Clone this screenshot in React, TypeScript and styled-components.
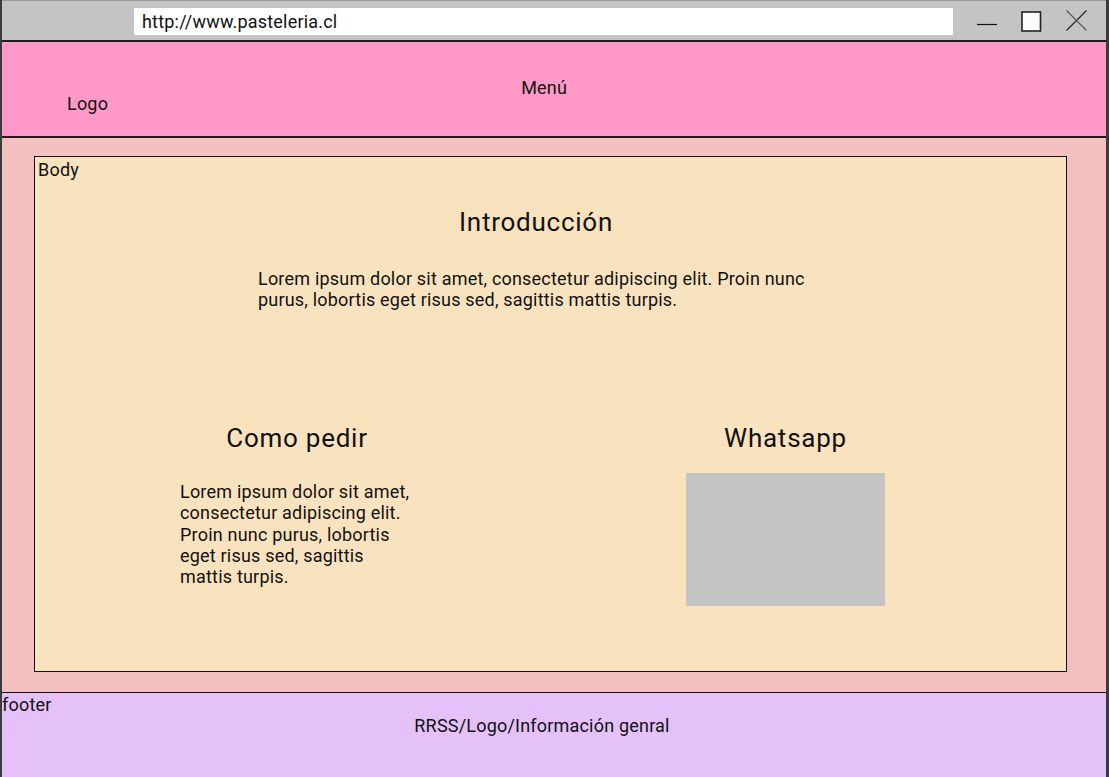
import React from "react";
import styled, { createGlobalStyle } from "styled-components";

const Global = createGlobalStyle`
  html, body { margin: 0; padding: 0; }
  body {
    font-family: Roboto, "Liberation Sans", sans-serif;
    color: #111;
    background: #3b3b3b;
    letter-spacing: 0.2px;
  }
`;

const Window = styled.div`
  width: 1109px;
  height: 777px;
  box-sizing: border-box;
  border-left: 2px solid #3b3b3b;
  border-right: 3px solid #3b3b3b;
  display: flex;
  flex-direction: column;
  overflow: hidden;
`;

const BrowserBar = styled.div`
  height: 40px;
  flex: none;
  box-sizing: border-box;
  background: #c4c4c4;
  border-top: 1px solid #9a9a9a;
  display: flex;
  align-items: flex-start;
`;

const UrlField = styled.div`
  margin: 7px 0 0 132px;
  width: 819px;
  height: 27px;
  box-sizing: border-box;
  background: #ffffff;
  padding-left: 8px;
  font-size: 18px;
  line-height: 27px;
  color: #111;
`;

const Controls = styled.div`
  display: flex;
  align-items: center;
  margin: 8px 0 0 24px;
`;

const ControlIcon = styled.svg<{ $ml: number }>`
  display: block;
  margin-left: ${(p) => p.$ml}px;
`;

const Header = styled.header`
  height: 98px;
  flex: none;
  box-sizing: border-box;
  background: #ff99c8;
  border-top: 2px solid #1e1e1e;
  border-bottom: 2px solid #1e1e1e;
  display: flex;
  align-items: flex-start;
`;

const HeaderText = styled.div<{ $mt: number; $ml: number }>`
  font-size: 18px;
  line-height: 21px;
  margin-top: ${(p) => p.$mt}px;
  margin-left: ${(p) => p.$ml}px;
`;

const Main = styled.main`
  flex: 1;
  background: #f4bfbf;
  padding: 18px 39px 20px 32px;
  display: flex;
  min-height: 0;
`;

const Card = styled.section`
  flex: 1;
  background: #f9e3bf;
  border: 1.5px solid #111;
  padding: 2px 0 0 3px;
  display: flex;
  flex-direction: column;
  align-items: flex-start;
`;

const Label = styled.div`
  font-size: 18px;
  line-height: 21px;
`;

const Intro = styled.div`
  margin: 27px 0 0 220px;
  width: 560px;
  display: flex;
  flex-direction: column;
  align-items: stretch;
`;

const Heading = styled.h2<{ $shift?: number }>`
  margin: 0;
  padding-right: ${(p) => p.$shift ?? 0}px;
  font-size: 26px;
  font-weight: 400;
  line-height: 30px;
  letter-spacing: 0.75px;
  text-align: center;
`;

const Paragraph = styled.p<{ $mt: number }>`
  margin: ${(p) => p.$mt}px 0 0;
  font-size: 18px;
  line-height: 21.4px;
`;

const Columns = styled.div`
  margin: 112px 0 0 142px;
  display: flex;
  gap: 270px;
`;

const Column = styled.div<{ $w: number }>`
  width: ${(p) => p.$w}px;
  display: flex;
  flex-direction: column;
`;

const Placeholder = styled.div`
  margin-top: 20px;
  width: 199px;
  height: 133px;
  background: #c4c4c4;
`;

const Footer = styled.footer`
  height: 85px;
  flex: none;
  box-sizing: border-box;
  background: #e4c1f9;
  border-top: 1.5px solid #111;
  display: flex;
  flex-direction: column;
`;

const FooterLabel = styled.div`
  font-size: 18px;
  line-height: 21px;
  margin-top: 1px;
`;

const FooterText = styled.div`
  font-size: 18px;
  line-height: 21px;
  text-align: center;
  padding-right: 24px;
`;

export default function App() {
  return (
    <>
      <Global />
      <Window>
        <BrowserBar>
          <UrlField>http://www.pasteleria.cl</UrlField>
          <Controls>
            <ControlIcon $ml={0} width="22" height="22" viewBox="0 0 22 22">
              <line x1="0" y1="14.5" x2="20" y2="14.5" stroke="#111" strokeWidth="1.2" />
            </ControlIcon>
            <ControlIcon $ml={22} width="22" height="22" viewBox="0 0 22 22">
              <rect x="1" y="2" width="18.5" height="19" fill="#fdfbf9" stroke="#222" strokeWidth="1.6" />
            </ControlIcon>
            <ControlIcon $ml={22} width="24" height="24" viewBox="0 0 24 24">
              <line x1="1.5" y1="21.5" x2="21.5" y2="1.5" stroke="#222" strokeWidth="1.1" />
              <line x1="1.5" y1="1.5" x2="21.5" y2="21.5" stroke="#555" strokeWidth="1.1" />
            </ControlIcon>
          </Controls>
        </BrowserBar>
        <Header>
          <HeaderText $mt={51} $ml={65}>Logo</HeaderText>
          <HeaderText $mt={35} $ml={413}>Menú</HeaderText>
        </Header>
        <Main>
          <Card>
            <Label>Body</Label>
            <Intro>
              <Heading $shift={4}>Introducción</Heading>
              <Paragraph $mt={31}>
                Lorem ipsum dolor sit amet, consectetur adipiscing elit. Proin nunc purus, lobortis
                eget risus sed, sagittis mattis turpis.
              </Paragraph>
            </Intro>
            <Columns>
              <Column $w={236}>
                <Heading $shift={2}>Como pedir</Heading>
                <Paragraph $mt={28}>
                  Lorem ipsum dolor sit amet, consectetur adipiscing elit. Proin nunc purus, lobortis
                  eget risus sed, sagittis mattis turpis.
                </Paragraph>
              </Column>
              <Column $w={199}>
                <Heading>Whatsapp</Heading>
                <Placeholder />
              </Column>
            </Columns>
          </Card>
        </Main>
        <Footer>
          <FooterLabel>footer</FooterLabel>
          <FooterText>RRSS/Logo/Información genral</FooterText>
        </Footer>
      </Window>
    </>
  );
}
